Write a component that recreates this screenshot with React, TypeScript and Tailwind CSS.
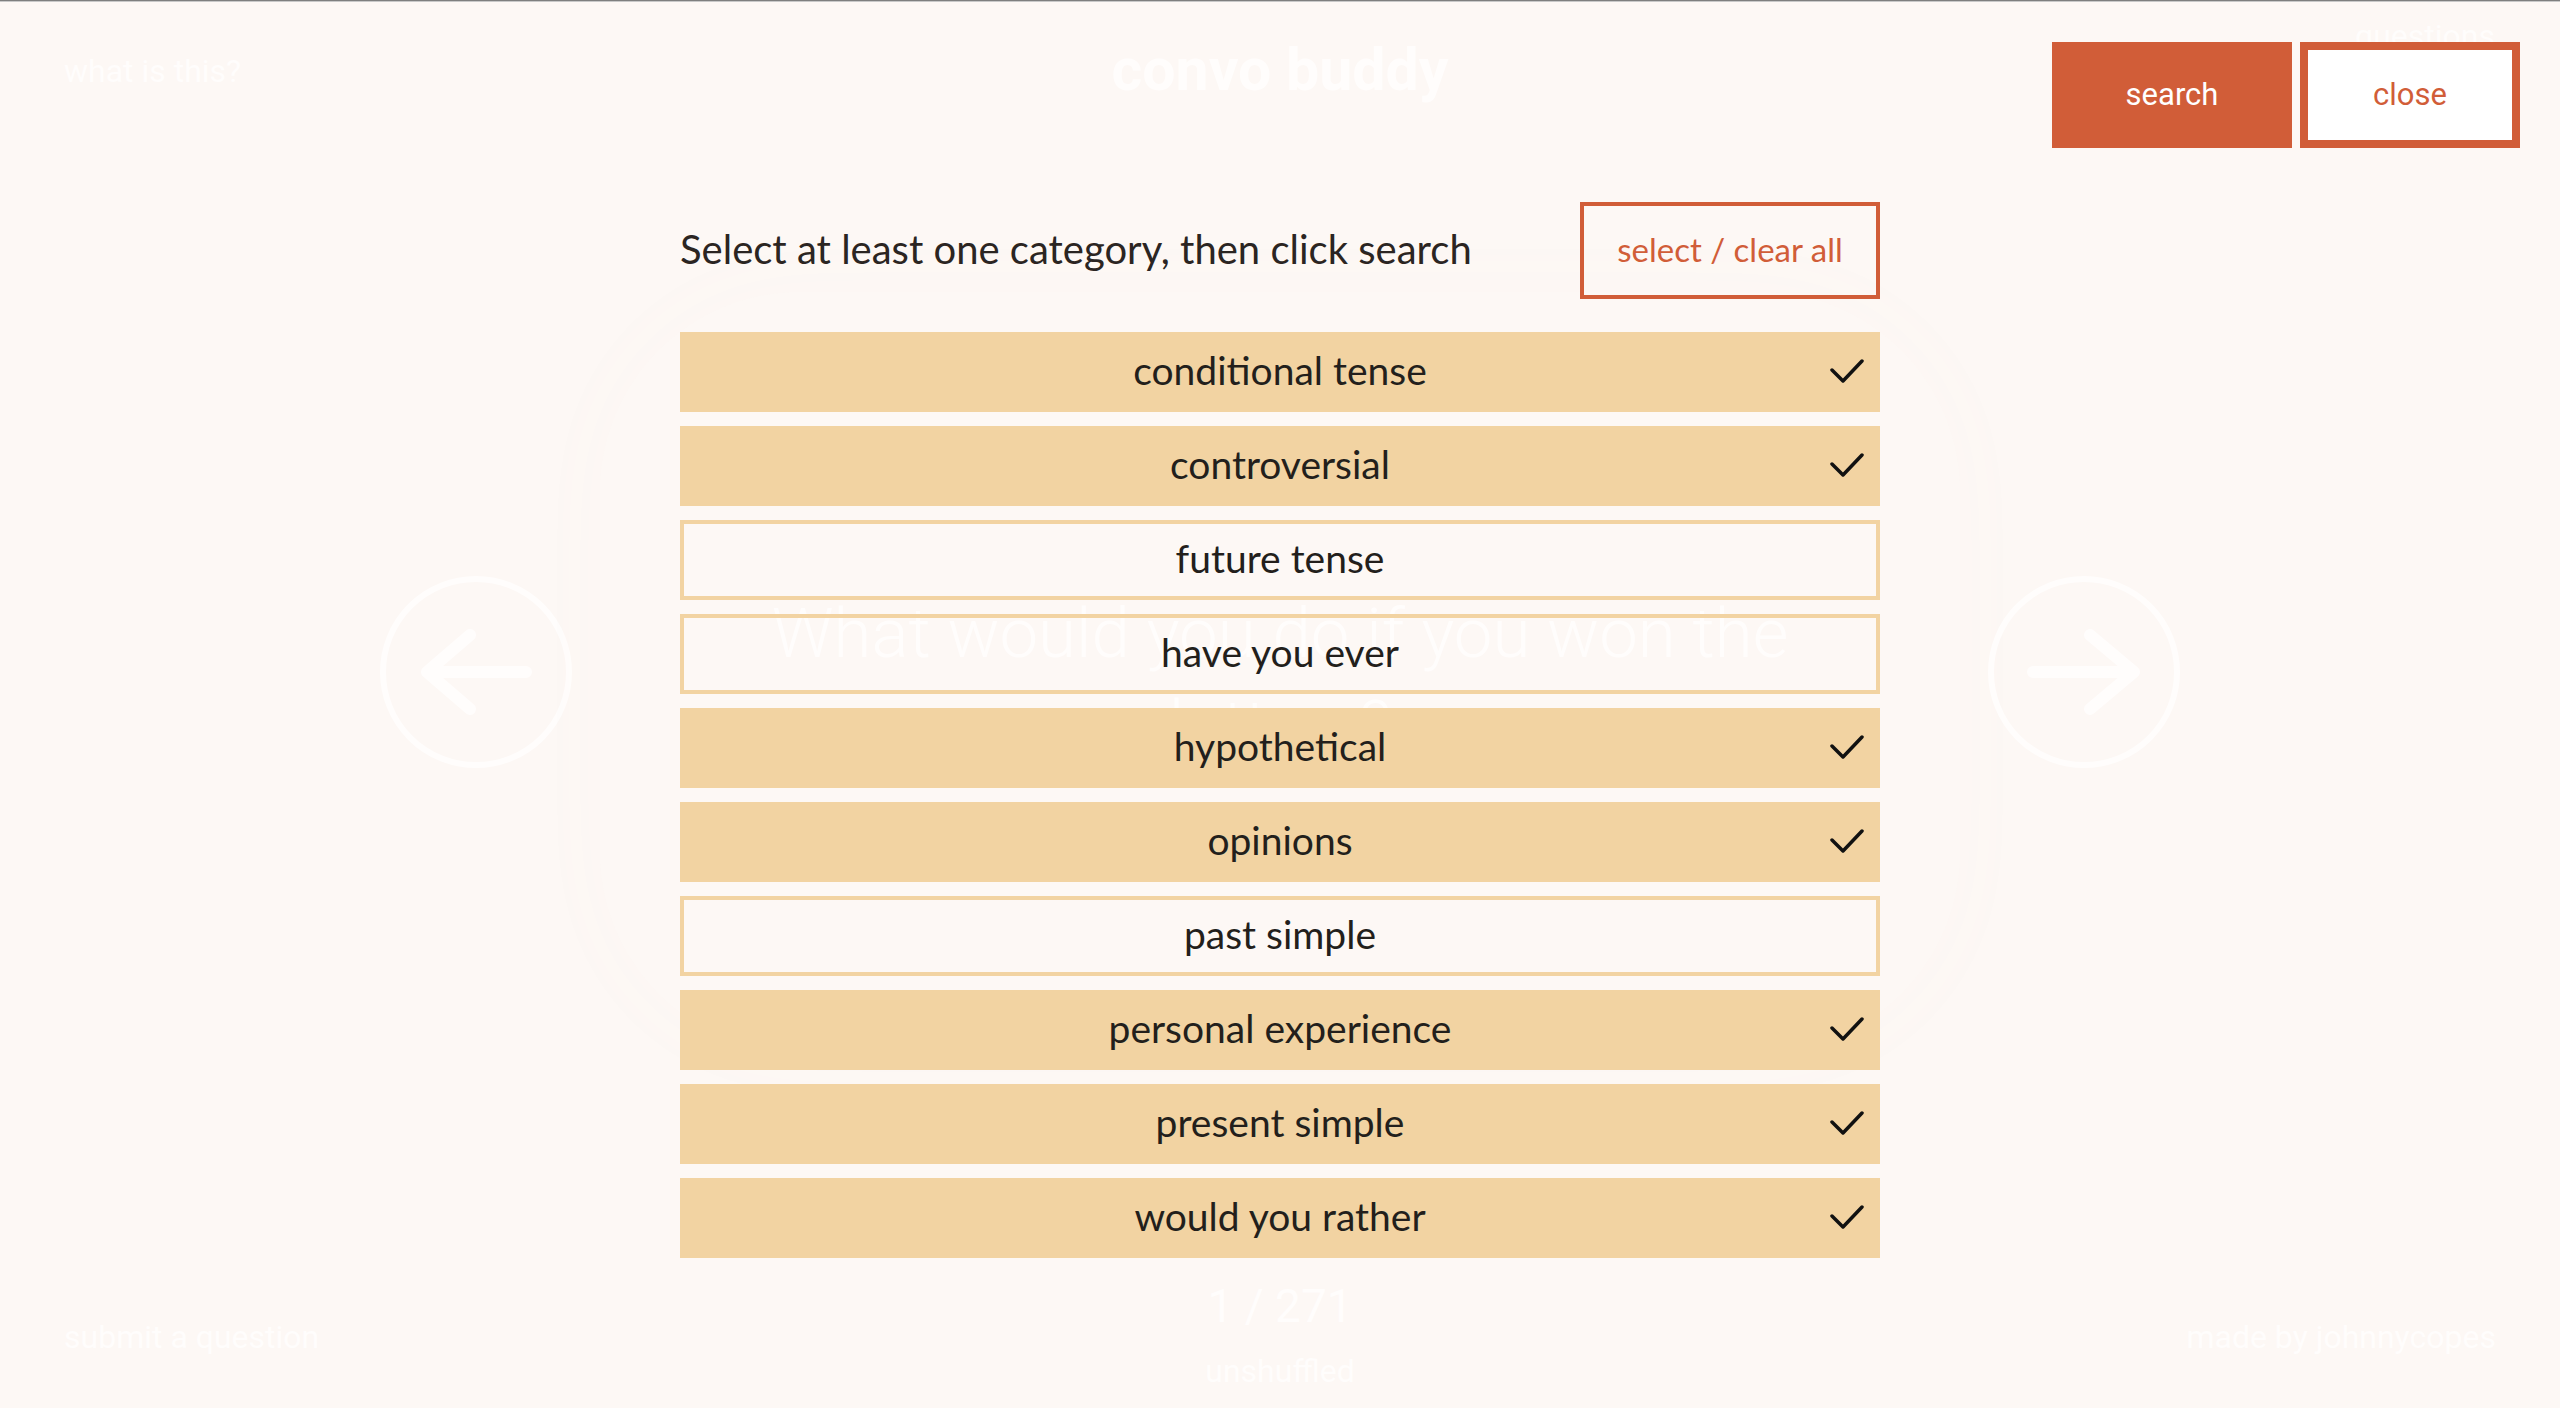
import { useState } from 'react'

const initialCategories = [
  { label: 'conditional tense', selected: true },
  { label: 'controversial', selected: true },
  { label: 'future tense', selected: false },
  { label: 'have you ever', selected: false },
  { label: 'hypothetical', selected: true },
  { label: 'opinions', selected: true },
  { label: 'past simple', selected: false },
  { label: 'personal experience', selected: true },
  { label: 'present simple', selected: true },
  { label: 'would you rather', selected: true },
]

export default function App() {
  const [categories, setCategories] = useState(initialCategories)

  const toggle = (label: string) =>
    setCategories((prev) =>
      prev.map((c) => (c.label === label ? { ...c, selected: !c.selected } : c))
    )

  const toggleAll = () => {
    const allOn = categories.every((c) => c.selected)
    setCategories((prev) => prev.map((c) => ({ ...c, selected: !allOn })))
  }

  return (
    <div className="relative flex h-[1408px] w-[2560px] flex-col overflow-hidden bg-[#fdf8f5]">
      <div className="h-[2px] shrink-0 border-t border-[#7f7f7f] bg-[#c9c9c9]" />
      <BackgroundPage />

      {/* category picker overlay */}
      <div className="absolute inset-0 flex flex-col">
        <div className="flex justify-end gap-[8px] pr-[40px] pt-[42px]">
          <button
            type="button"
            className="h-[106px] w-[240px] bg-[#d15d38] font-[Roboto,sans-serif] text-[31px] text-white"
          >
            search
          </button>
          <button
            type="button"
            className="h-[106px] w-[220px] border-[8px] border-[#d15d38] bg-white font-[Roboto,sans-serif] text-[31px] text-[#d15d38]"
          >
            close
          </button>
        </div>

        <div className="mx-auto mt-[54px] w-[1200px] font-[Lato,sans-serif]">
          <div className="flex h-[97px] items-center justify-between">
            <p className="-mt-[4px] text-[40px] text-[#2b2522]">
              Select at least one category, then click search
            </p>
            <button
              type="button"
              onClick={toggleAll}
              className="h-[97px] w-[300px] border-[4px] border-[#d15d38] pb-[2px] text-[33px] text-[#d15d38]"
            >
              select / clear all
            </button>
          </div>

          <ul className="mt-[33px] flex flex-col gap-[14px]">
            {categories.map((c) => (
              <li key={c.label}>
                <button
                  type="button"
                  onClick={() => toggle(c.label)}
                  className={
                    c.selected
                      ? 'grid h-[80px] w-full grid-cols-[1fr_auto_1fr] items-center bg-[#f2d3a2] px-[16px] text-[39px] text-[#231f1c]'
                      : 'grid h-[80px] w-full grid-cols-[1fr_auto_1fr] items-center border-[4px] border-[#f2d3a2] px-[12px] text-[39px] text-[#231f1c]'
                  }
                >
                  <span />
                  <span className="-mt-[4px]">{c.label}</span>
                  <span className="flex justify-end">
                    {c.selected && <CheckMark />}
                  </span>
                </button>
              </li>
            ))}
          </ul>
        </div>
      </div>
    </div>
  )
}

function BackgroundPage() {
  return (
    <div className="flex flex-1 flex-col font-[Roboto,sans-serif] text-[#fffdfc]">
      <header className="grid h-[128px] grid-cols-3 items-start px-[64px]">
        <a className="mt-[49px] text-[32px] leading-[40px]">what is this?</a>
        <h1 className="mt-[35px] text-center text-[59px] font-bold leading-[66px]">
          convo buddy
        </h1>
        <span className="mt-[14px] pr-[1px] text-right text-[32px] leading-[40px]">
          questions
        </span>
      </header>

      <main className="flex h-[1084px] items-center justify-center gap-[25px]">
        <ArrowCircle direction="left" />
        <div className="flex h-[760px] w-[1360px] items-center justify-center rounded-[200px] pt-[16px] shadow-[0_0_90px_rgba(214,170,140,0.025)]">
          <p className="max-w-[1080px] text-center text-[69px] font-light leading-[92px]">
            What would you do if you won the lottery?
          </p>
        </div>
        <ArrowCircle direction="right" />
      </main>

      <footer className="grid flex-1 grid-cols-3 items-start px-[64px]">
        <a className="mt-[103px] text-[32px] leading-[40px]">submit a question</a>
        <div className="flex flex-col items-center">
          <span className="mt-[65px] text-[46px] leading-[54px]">1 / 271</span>
          <span className="mt-[18px] text-[32px] leading-[40px]">unshuffled</span>
        </div>
        <a className="mt-[103px] text-right text-[32px] leading-[40px]">
          made by johnnycopes
        </a>
      </footer>
    </div>
  )
}

function ArrowCircle({ direction }: { direction: 'left' | 'right' }) {
  return (
    <svg width="198" height="198" viewBox="0 0 198 198" fill="none" className="shrink-0">
      <circle cx="99" cy="99" r="93" stroke="#fffdfc" strokeWidth="6" />
      {direction === 'left' ? (
        <path
          d="M149 99H50M93 62 50 99l43 37"
          stroke="#fffdfc"
          strokeWidth="12"
          strokeLinecap="round"
          strokeLinejoin="round"
        />
      ) : (
        <path
          d="M48 99h101M105 62l44 37-44 37"
          stroke="#fffdfc"
          strokeWidth="12"
          strokeLinecap="round"
          strokeLinejoin="round"
        />
      )}
    </svg>
  )
}

function CheckMark() {
  return (
    <svg width="34" height="26" viewBox="0 0 34 26" fill="none">
      <polyline
        points="2,11 13,22 32,2"
        stroke="#111"
        strokeWidth="3.5"
        strokeLinecap="round"
        strokeLinejoin="round"
      />
    </svg>
  )
}
